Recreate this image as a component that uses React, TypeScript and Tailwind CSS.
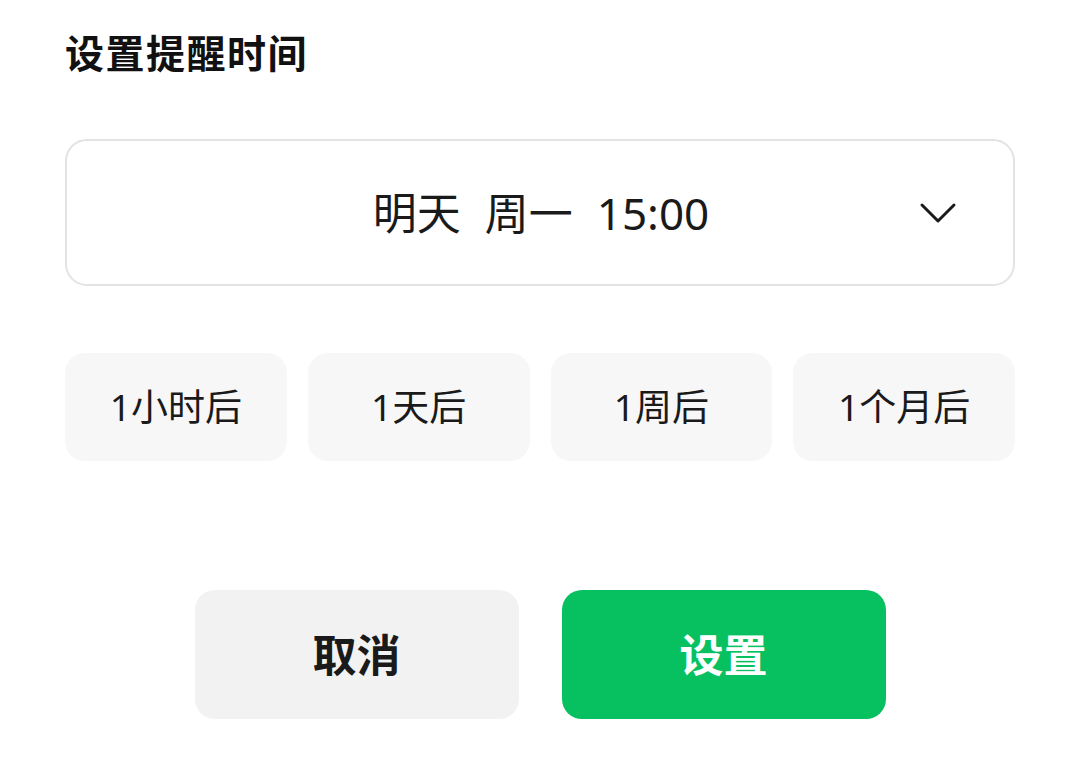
const QUICK_OPTIONS = ['1小时后', '1天后', '1周后', '1个月后'];

function Chevron() {
  return (
    <svg width="38" height="22" viewBox="0 0 38 22" fill="none">
      <path d="M3 3 L19 19 L35 3" stroke="#1a1a1a" strokeWidth="3" strokeLinecap="round" strokeLinejoin="round" />
    </svg>
  );
}

export default function App() {
  return (
    <div
      className="w-[1080px] h-[784px] bg-white px-[65px] pt-[28px] text-[#1a1a1a]"
      style={{ fontFamily: '"Noto Sans", "Noto Sans CJK SC", sans-serif' }}
    >
      {/* Title */}
      <h1 className="text-[39px] leading-[50px] font-bold text-[#111] tracking-[1.5px]">设置提醒时间</h1>

      {/* Date selector */}
      <div className="mt-[61px] h-[147px] rounded-[22px] border-2 border-[#e3e3e3] grid grid-cols-[1fr_auto_1fr] items-center px-[56px]">
        <div />
        <div className="text-[44px] leading-none flex gap-[24px] ml-[2px]">
          <span>明天</span>
          <span>周一</span>
          <span>15:00</span>
        </div>
        <div className="flex justify-end">
          <Chevron />
        </div>
      </div>

      {/* Quick options */}
      <div className="mt-[67px] grid grid-cols-4 gap-[21px]">
        {QUICK_OPTIONS.map((label) => (
          <div
            key={label}
            className="h-[108px] rounded-[20px] bg-[#f7f7f7] flex items-center justify-center text-[37px]"
          >
            {label}
          </div>
        ))}
      </div>

      {/* Actions */}
      <div className="mt-[129px] flex justify-center gap-[43px]">
        <button className="w-[324px] h-[129px] rounded-[20px] bg-[#f2f2f2] text-[44px] font-bold text-[#1a1a1a]">
          取消
        </button>
        <button className="w-[324px] h-[129px] rounded-[20px] bg-[#07c160] text-[44px] font-bold text-white">
          设置
        </button>
      </div>
    </div>
  );
}
